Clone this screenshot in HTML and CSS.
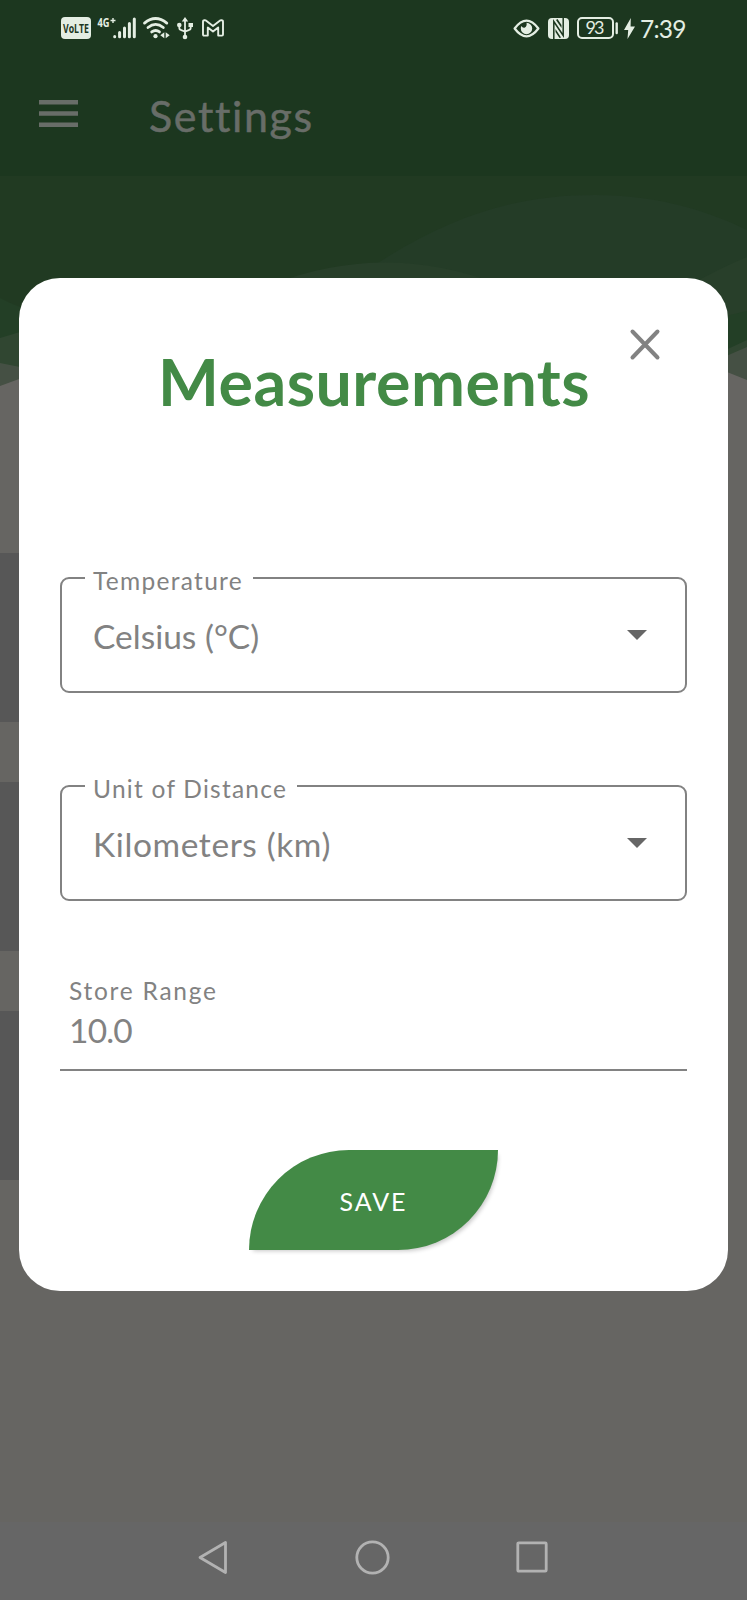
FILE: index.html
```html
<!DOCTYPE html>
<html lang="en">
<head>
<meta charset="utf-8">
<title>Settings</title>
<link rel="stylesheet" href="styles.css">
</head>
<body>
<div class="screen">
  <header class="top">
    <div class="status">
      <div class="status-left">
        <svg class="i-volte" width="30" height="22" viewBox="0 0 30 22"><rect width="30" height="22" rx="4" fill="#e4eee3"/><text x="2" y="15.800" textLength="26" lengthAdjust="spacingAndGlyphs" class="volte">VoLTE</text></svg>
        <svg class="i-signal" width="40" height="22" viewBox="0 0 40 22"><text x="0.500" y="10" textLength="12" lengthAdjust="spacingAndGlyphs" class="gen">4G</text><path d="M13.5 3.5h5M16 1v5" stroke="#e4eee3" stroke-width="1.4"/><g stroke="#e4eee3" stroke-width="3" stroke-linecap="round"><path d="M17.7 19.6v.2M22.6 15.5v4.3M27.5 11v8.8M32.4 6.500v13.300M37.300 1.900v17.900"/></g></svg>
        <svg class="i-wifi" width="27" height="22" viewBox="0 0 27 22"><g fill="none" stroke="#e4eee3" stroke-width="2.800" stroke-linecap="round"><path d="M1.500 6.100Q12.500-3 23.800 6.100M5 10.500Q12.600 4.300 20.300 10.500M8.700 14.900Q12.700 12 16.500 14.900"/></g><circle cx="12.500" cy="19.200" r="2.100" fill="#e4eee3"/><path d="M21.300 15.300v6l-4-3zM22.700 15.300v6l4-3z" fill="#e4eee3"/></svg>
        <svg class="i-usb" width="16" height="23" viewBox="0 0 16 23"><path d="M8 3v17M2.300 8v2.700q0 2 2 2.400L8 14.500l3.700-1.400q2-.4 2-2.400V8" fill="none" stroke="#e4eee3" stroke-width="1.800"/><path d="M8 0l3.200 4.500H4.800zM11.500 6H16v4h-4.500z" fill="#e4eee3"/><circle cx="2.300" cy="8" r="2.300" fill="#e4eee3"/><circle cx="8" cy="20" r="2.300" fill="#e4eee3"/></svg>
        <svg class="i-mail" width="22" height="18" viewBox="0 0 22 18"><path d="M1 15.600V2.800Q1 1 2.700 1.200L4.200 1.700 11 7l6.800-5.300 1.500-.5Q21 1 21 2.800v12.800q0 1-1 1h-3.800V8.500L11 12.600 5.800 8.500v8.100H2q-1 0-1-1z" fill="none" stroke="#e4eee3" stroke-width="1.900" stroke-linejoin="round"/></svg>
      </div>
      <div class="status-right">
        <svg width="27" height="19" viewBox="0 0 28 20"><path d="M1.500 10Q14-6.500 26.500 10 14 26.500 1.500 10z" fill="none" stroke="#e4eee3" stroke-width="2.400" stroke-linejoin="round"/><path d="M14 4a6 6 0 1 1-6 6q0-1.500.6-2.700 1.300 2.500 3.700 1.700Q14.800 7.500 14 4z" fill="#e4eee3"/></svg>
        <svg class="i-nfc" width="21" height="21" viewBox="0 0 21 21"><rect width="21" height="21" rx="4" fill="#e4eee3"/><path d="M5.800 21V3.500L15.200 17.500V0" fill="none" stroke="#1c371f" stroke-width="1.500"/><path d="M8 2l5.500 8V7L9.500 1zM7.500 11v3l4 6 1.500-.5z" fill="#1c371f"/></svg>
        <svg class="i-batt" width="41" height="22" viewBox="0 0 41 22"><rect x="1" y="1" width="35" height="20" rx="4" fill="none" stroke="#e4eee3" stroke-width="2"/><path d="M39.700 6.500v9.500" stroke="#e4eee3" stroke-width="2.400" stroke-linecap="round"/><text x="8.500" y="17" textLength="19" class="pct">93</text></svg>
        <svg class="i-bolt" width="11" height="21" viewBox="0 0 11 21"><path d="M6.800 0L0 12h4.200L3.500 21 11 8.500H6.600z" fill="#e4eee3"/></svg>
        <span class="time">7:39</span>
      </div>
    </div>
    <div class="bar">
      <svg width="39" height="27" viewBox="0 0 39 27"><path d="M0 2.300h39M0 13.500h39M0 24.700h39" stroke="#686d68" stroke-width="4.500"/></svg>
      <h1 class="title">Settings</h1>
    </div>
  </header>
  <svg class="waves" width="747" height="224" viewBox="0 176 747 224">
    <path fill="#213a22" d="M0 176H747V400H0z"/>
    <path fill="#243c27" d="M345 285C430 225 500 195 595 195 660 195 710 212 747 230V400H345z"/>
    <path fill="#283f2a" d="M270 285Q386 240 500 285zM690 285Q720 268 747 257V400H690z"/>
    <path fill="#233f26" d="M0 298Q15 306 30 310V400H0zM747 311L717 318V400H747z"/>
    <path fill="#304631" d="M0 338L30 329V400H0zM747 340L717 354V400H747z"/>
    <path fill="#455044" d="M0 363L30 369V400H0zM747 347L717 360V400H747z"/>
    <path fill="#666562" d="M0 386L30 375V400H0zM747 380L717 368V400H747z"/>
  </svg>
  <div class="rows"><div class="row"></div><div class="row"></div><div class="row"></div></div>
  <nav class="nav">
    <svg width="30" height="35" viewBox="0 0 30 35"><path d="M27.500 2.500v30L2 17.500z" fill="none" stroke="#b2b2b2" stroke-width="2.800" stroke-linejoin="round"/></svg>
    <svg width="35" height="35" viewBox="0 0 35 35"><circle cx="17.500" cy="17.500" r="15.700" fill="none" stroke="#b2b2b2" stroke-width="2.800"/></svg>
    <svg width="32" height="32" viewBox="0 0 32 32"><rect x="1.800" y="1.800" width="28.400" height="28.400" rx="1" fill="none" stroke="#b2b2b2" stroke-width="2.800"/></svg>
  </nav>

  <section class="dialog">
    <svg class="close" width="30" height="31" viewBox="0 0 30 31"><path d="M2.500 2.500l25 26M27.500 2.500l-25 26" stroke="#828282" stroke-width="4" stroke-linecap="round"/></svg>
    <h2 class="heading">Measurements</h2>
    <div class="select">
      <label class="legend"><span class="t-temp">Temperature</span></label>
      <span class="value">Celsius (<span class="deg">°</span>C)</span>
      <svg class="arrow" width="20" height="10" viewBox="0 0 20 10"><path d="M0 0h20L10 10z" fill="#666"/></svg>
    </div>
    <div class="select second">
      <label class="legend"><span class="t-unit">Unit of Distance</span></label>
      <span class="value t-kilo">Kilometers (km)</span>
      <svg class="arrow" width="20" height="10" viewBox="0 0 20 10"><path d="M0 0h20L10 10z" fill="#666"/></svg>
    </div>
    <div class="field">
      <label class="field-label">Store Range</label>
      <span class="field-value">10.0</span>
    </div>
    <button class="save">SAVE</button>
  </section>
</div>
</body>
</html>
```
FILE: styles.css
```css
* { box-sizing: border-box; }
body { margin: 0; font-family: Lato, "Noto Sans", sans-serif; }
svg { display: block; flex: none; overflow: visible; }
.screen { position: relative; width: 747px; height: 1600px; overflow: hidden; background: #666562; display: flex; flex-direction: column; }
.top { height: 176px; background: #1c371f; flex: none; }
.status { height: 56px; display: flex; justify-content: space-between; padding: 0 62px 0 61px; }
.status-left, .status-right { display: flex; align-items: center; }
.i-signal { margin-left: 6px; }
.i-wifi { margin-left: 6px; }
.i-usb { margin-left: 7px; }
.i-mail { margin-left: 9px; }
.i-nfc { margin-left: 8px; }
.i-batt { margin-left: 8px; }
.i-bolt { margin-left: 6px; }
.volte { font: 700 12px "Open Sans", sans-serif; fill: #1c371f; }
.gen { font: 700 12px "Open Sans", sans-serif; fill: #e4eee3; }
.pct { font: 400 18px Lato, sans-serif; fill: #e4eee3; }
.time { margin-left: 5px; width: 45px; padding-top: 1px; font-size: 24.500px; line-height: 30px; letter-spacing: -.8px; color: #e4eee3; white-space: nowrap; }
.bar { display: flex; align-items: flex-start; padding: 44px 0 0 39px; }
.title { margin: -10px 0 0 71px; font-size: 43px; line-height: 52px; font-weight: 400; color: #686d68; letter-spacing: 1.600px; -webkit-text-stroke: .5px #686d68; }
.waves { flex: none; }
.rows { padding-top: 153px; display: flex; flex-direction: column; gap: 60px; }
.row { width: 700px; height: 169px; background: #575757; }
.nav { margin-top: auto; height: 78px; background: #666; display: flex; align-items: center; padding: 0 199px 8px 198px; justify-content: space-between; }
.dialog { position: absolute; left: 19px; top: 278px; width: 709px; height: 1013px; border-radius: 41px; background: #fff; padding: 51px 41px 0; display: flex; flex-direction: column; }
.close { align-self: flex-end; margin-right: 27px; }
.heading { margin: -19px 0 0 98px; height: 80px; font-size: 64.500px; line-height: 80px; font-weight: 700; letter-spacing: .5px; color: #438a46; white-space: nowrap; }
.select { margin-top: 156px; height: 116px; border: 2px solid #828282; border-radius: 9px; position: relative; display: flex; align-items: center; justify-content: space-between; padding: 0 38px 0 31px; color: #828282; flex: none; }
.select.second { margin-top: 92px; }
.legend { position: absolute; left: 23px; top: -13px; padding: 0 10px 0 8px; height: 30px; background: #fff; font-size: 24.500px; line-height: 30px; white-space: nowrap; }
.value { font-size: 33.500px; line-height: 40px; padding-top: 1px; white-space: nowrap; }
.t-kilo { letter-spacing: .6px; }
.field { margin-top: 75px; height: 95px; border-bottom: 2px solid #828282; padding-left: 9px; display: flex; flex-direction: column; color: #828282; flex: none; }
.field-label { font-size: 24.500px; line-height: 30px; letter-spacing: 1.750px; }
.field-value { font-size: 33.500px; line-height: 40px; margin-top: 4px; letter-spacing: -.8px; }
.t-temp { letter-spacing: 1.300px; }
.t-unit { letter-spacing: 1.250px; }
.save { align-self: center; margin-top: 79px; width: 249px; height: 100px; border: 0; border-radius: 100px 0 100px 0; background: #438a46; color: #fff; font: 400 25px Lato, sans-serif; letter-spacing: 1.900px; padding: 2px 0 0; box-shadow: 2px 3px 4px -2px rgba(0,0,0,.22); }
```
